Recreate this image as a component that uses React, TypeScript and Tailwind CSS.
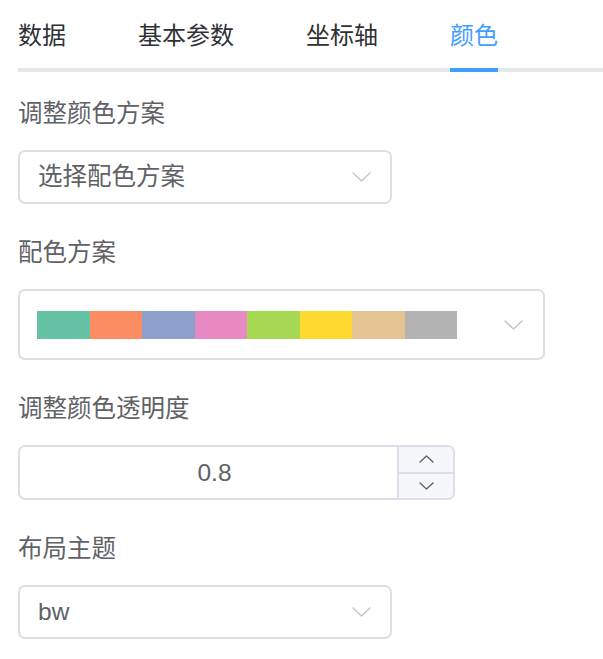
import React from "react";

const font = { fontFamily: '"Liberation Sans", "Noto Sans CJK SC", sans-serif' };

function Chevron({ up = false, w = 19, h = 10, color = "#c0c4cc" }: { up?: boolean; w?: number; h?: number; color?: string }) {
  return (
    <svg width={w} height={h} viewBox={`0 0 ${w} ${h}`} fill="none">
      <polyline
        points={up ? `1,${h - 1} ${w / 2},1 ${w - 1},${h - 1}` : `1,1 ${w / 2},${h - 1} ${w - 1},1`}
        stroke={color}
        strokeWidth="1.4"
        strokeLinecap="round"
        strokeLinejoin="round"
      />
    </svg>
  );
}

const swatches = ["#66c2a5", "#fc8d62", "#8da0cb", "#e78ac3", "#a6d854", "#ffd92f", "#e5c494", "#b3b3b3"];

function Label({ children }: { children: React.ReactNode }) {
  return <div className="text-[24.5px] leading-[24px] text-[#606266] mb-[24px]">{children}</div>;
}

function Select({ text, width }: { text: string; width: string }) {
  return (
    <div className={`${width} h-[54px] border-2 border-[#dcdfe6] rounded-[7px] flex items-center pl-[18px] pr-[19px] bg-white`}>
      <span className="flex-1 text-[24.5px] leading-[24px] text-[#606266]">{text}</span>
      <Chevron />
    </div>
  );
}

export default function App() {
  const tabs = ["数据", "基本参数", "坐标轴", "颜色"];
  return (
    <div className="w-[603px] h-[659px] bg-white pl-[18px] overflow-hidden" style={font}>
      <div className="flex gap-[72px] border-b-4 border-[#e4e7ed]">
        {tabs.map((t, i) => (
          <div
            key={t}
            className={`relative pt-[22px] pb-[18px] text-[24px] leading-[28px] ${i === 3 ? "text-[#409eff]" : "text-[#303133]"}`}
          >
            {t}
            {i === 3 && <div className="absolute left-0 right-0 bottom-[-4px] h-[4px] bg-[#409eff]" />}
          </div>
        ))}
      </div>

      <div className="mt-[30px]">
        <Label>调整颜色方案</Label>
        <Select text="选择配色方案" width="w-[374px]" />
      </div>

      <div className="mt-[37px]">
        <Label>配色方案</Label>
        <div className="w-[527px] h-[71px] border-2 border-[#dcdfe6] rounded-[7px] flex items-center pl-[17px] pr-[20px]">
          <div className="flex flex-1">
            {swatches.map((c) => (
              <div key={c} className="w-[52.5px] h-[28px]" style={{ backgroundColor: c }} />
            ))}
          </div>
          <Chevron />
        </div>
      </div>

      <div className="mt-[37px]">
        <Label>调整颜色透明度</Label>
        <div className="w-[437px] h-[55px] border-2 border-[#dcdfe6] rounded-[7px] flex overflow-hidden">
          <div className="flex-1 flex items-center justify-center pl-[12px] text-[24.5px] leading-[24px] text-[#606266]">0.8</div>
          <div className="w-[56px] bg-[#f5f7fa] border-l-2 border-[#dcdfe6] flex flex-col">
            <div className="flex-1 flex items-center justify-center border-b-2 border-[#dcdfe6]">
              <Chevron up w={15} h={8} color="#606266" />
            </div>
            <div className="flex-1 flex items-center justify-center">
              <Chevron w={15} h={8} color="#606266" />
            </div>
          </div>
        </div>
      </div>

      <div className="mt-[37px]">
        <Label>布局主题</Label>
        <Select text="bw" width="w-[374px]" />
      </div>
    </div>
  );
}
